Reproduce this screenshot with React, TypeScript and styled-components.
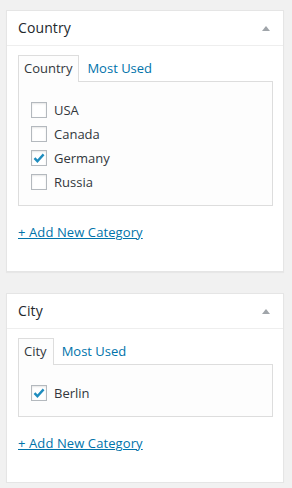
import styled, { createGlobalStyle } from 'styled-components';

const GlobalStyle = createGlobalStyle`
  body {
    margin: 0;
    background: #f1f1f1;
    font-family: "Open Sans", "Liberation Sans", sans-serif;
    color: #32373c;
  }
`;

const Page = styled.div`
  padding: 10px 8px 0 6px;
  display: flex;
  flex-direction: column;
  gap: 21px;
`;

const Postbox = styled.div`
  background: #fff;
  border: 1px solid #e5e5e5;
  box-shadow: 0 1px 1px rgba(0, 0, 0, 0.04);
`;

const Header = styled.div`
  display: flex;
  align-items: center;
  justify-content: space-between;
  height: 34px;
  padding: 0 12px 0 11px;
  border-bottom: 1px solid #eee;
`;

const Title = styled.h2`
  margin: 0;
  font-size: 14px;
  font-weight: 400;
  color: #23282d;
  line-height: 1.4;
  letter-spacing: 0.1px;
`;

const Toggle = styled.span`
  width: 0;
  height: 0;
  border-left: 4px solid transparent;
  border-right: 4px solid transparent;
  border-bottom: 5px solid #a0a5aa;
  margin-right: 1px;
`;

const Inside = styled.div`
  padding: 9px 10px 29px 11px;
`;

const Tabs = styled.ul`
  display: flex;
  list-style: none;
  margin: 0;
  padding: 0;
  gap: 2px;
`;

const Tab = styled.li<{ $active?: boolean }>`
  font-size: 13px;
  line-height: 18px;
  padding: 3px 6px 5px 5px;
  border: 1px solid ${(p) => (p.$active ? '#ddd' : 'transparent')};
  border-bottom: none;
  background: ${(p) => (p.$active ? '#fdfdfd' : 'transparent')};
  color: ${(p) => (p.$active ? '#32373c' : '#0073aa')};
  margin-bottom: -1px;
  position: relative;
  z-index: 1;
`;

const Panel = styled.div`
  border: 1px solid #ddd;
  background: #fdfdfd;
  padding: 16px 12px 11px;
`;

const Checklist = styled.ul`
  list-style: none;
  margin: 0;
  padding: 0;
`;

const Item = styled.li`
  display: flex;
  align-items: center;
  gap: 7px;
  height: 24px;
  font-size: 13px;
  color: #32373c;
`;

const Box = styled.span`
  width: 16px;
  height: 16px;
  box-sizing: border-box;
  border: 1px solid #b4b9be;
  background: #fff;
  box-shadow: inset 0 1px 2px rgba(0, 0, 0, 0.1);
  display: flex;
  align-items: center;
  justify-content: center;
`;

const AddLink = styled.a`
  display: inline-block;
  margin-top: 17px;
  font-size: 13px;
  line-height: 18px;
  color: #0073aa;
  text-decoration: underline;
  letter-spacing: 0.1px;
`;

function Checkbox({ checked }: { checked?: boolean }) {
  return (
    <Box>
      {checked && (
        <svg width="14" height="14" viewBox="0 0 14 14">
          <path d="M2.5 7.2 L5.4 10.2 L11.6 3.4" fill="none" stroke="#1e8cbe" strokeWidth="2.4" />
        </svg>
      )}
    </Box>
  );
}

type Term = { name: string; checked?: boolean };

function Metabox({ title, terms }: { title: string; terms: Term[] }) {
  return (
    <Postbox>
      <Header>
        <Title>{title}</Title>
        <Toggle />
      </Header>
      <Inside>
        <Tabs>
          <Tab $active>{title}</Tab>
          <Tab>Most Used</Tab>
        </Tabs>
        <Panel>
          <Checklist>
            {terms.map((t) => (
              <Item key={t.name}>
                <Checkbox checked={t.checked} />
                {t.name}
              </Item>
            ))}
          </Checklist>
        </Panel>
        <AddLink href="#">+ Add New Category</AddLink>
      </Inside>
    </Postbox>
  );
}

export default function App() {
  return (
    <Page>
      <GlobalStyle />
      <Metabox
        title="Country"
        terms={[{ name: 'USA' }, { name: 'Canada' }, { name: 'Germany', checked: true }, { name: 'Russia' }]}
      />
      <Metabox title="City" terms={[{ name: 'Berlin', checked: true }]} />
    </Page>
  );
}
